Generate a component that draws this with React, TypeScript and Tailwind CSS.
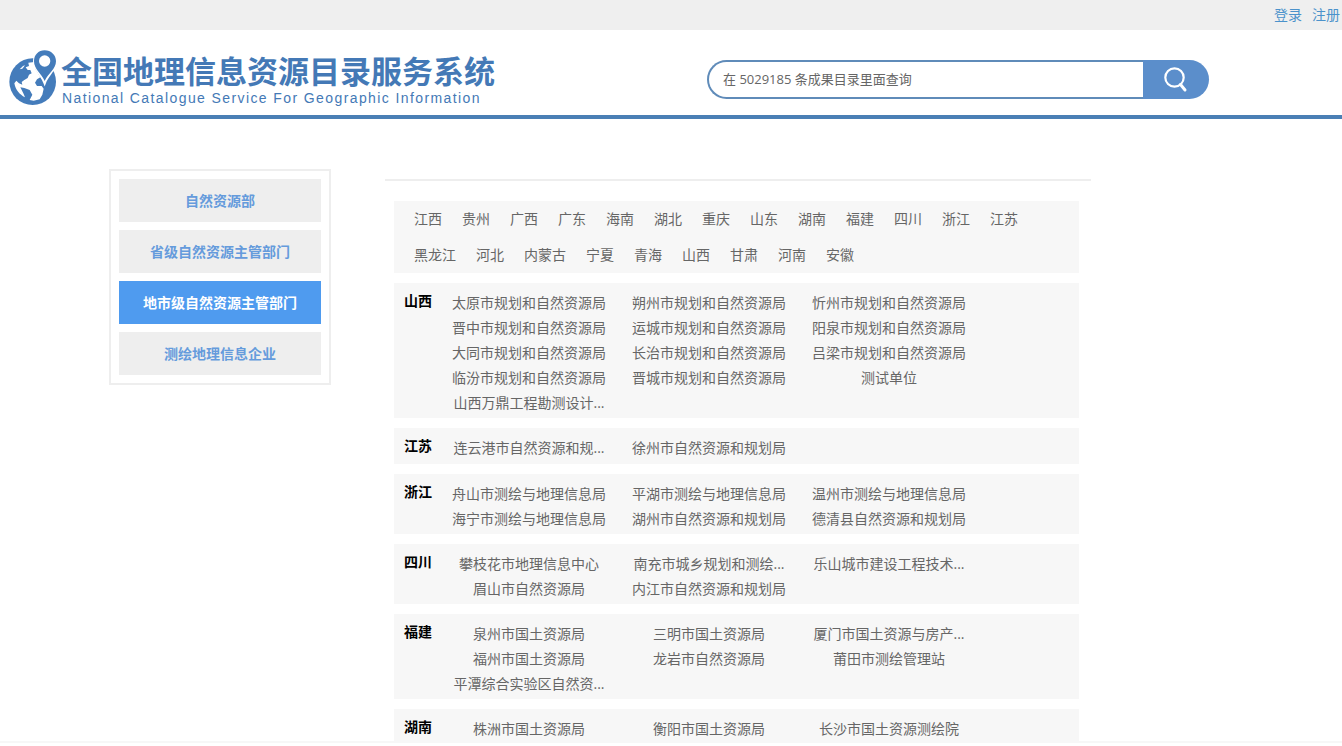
const regions = [
  "江西", "贵州", "广西", "广东", "海南", "湖北", "重庆", "山东", "湖南", "福建", "四川",
  "浙江", "江苏", "黑龙江", "河北", "内蒙古", "宁夏", "青海", "山西", "甘肃", "河南", "安徽",
];

interface Group {
  name: string;
  units: string[];
}

const groups: Group[] = [
  {
    name: "山西",
    units: [
      "太原市规划和自然资源局",
      "朔州市规划和自然资源局",
      "忻州市规划和自然资源局",
      "晋中市规划和自然资源局",
      "运城市规划和自然资源局",
      "阳泉市规划和自然资源局",
      "大同市规划和自然资源局",
      "长治市规划和自然资源局",
      "吕梁市规划和自然资源局",
      "临汾市规划和自然资源局",
      "晋城市规划和自然资源局",
      "测试单位",
      "山西万鼎工程勘测设计...",
    ],
  },
  {
    name: "江苏",
    units: ["连云港市自然资源和规...", "徐州市自然资源和规划局"],
  },
  {
    name: "浙江",
    units: [
      "舟山市测绘与地理信息局",
      "平湖市测绘与地理信息局",
      "温州市测绘与地理信息局",
      "海宁市测绘与地理信息局",
      "湖州市自然资源和规划局",
      "德清县自然资源和规划局",
    ],
  },
  {
    name: "四川",
    units: [
      "攀枝花市地理信息中心",
      "南充市城乡规划和测绘...",
      "乐山城市建设工程技术...",
      "眉山市自然资源局",
      "内江市自然资源和规划局",
    ],
  },
  {
    name: "福建",
    units: [
      "泉州市国土资源局",
      "三明市国土资源局",
      "厦门市国土资源与房产...",
      "福州市国土资源局",
      "龙岩市自然资源局",
      "莆田市测绘管理站",
      "平潭综合实验区自然资...",
    ],
  },
  {
    name: "湖南",
    units: ["株洲市国土资源局", "衡阳市国土资源局", "长沙市国土资源测绘院"],
  },
];

const categories = [
  { label: "自然资源部", active: false },
  { label: "省级自然资源主管部门", active: false },
  { label: "地市级自然资源主管部门", active: true },
  { label: "测绘地理信息企业", active: false },
];

function GlobeLogo() {
  return (
    <svg viewBox="0 0 144 168" className="h-14 w-12 shrink-0" aria-hidden="true">
      <circle cx="71" cy="95" r="70" fill="#447cbb" />
      {/* oceans */}
      <path
        d="M58 38 L76 36 L80 58 L94 82 L84 88 L78 98 L84 108 L98 108 L104 116 L100 134 L92 148 L74 152 L62 150 L70 134 L62 120 L46 114 L34 112 L44 132 L48 142 C32 134 20 120 16 100 L22 92 L30 100 L40 104 L38 96 L46 90 L56 84 L60 74 L68 70 L64 60 L56 60 L50 52 L60 48 Z"
        fill="#fff"
      />
      <path d="M32 58 L42 48 L48 46 L40 56 Z" fill="#fff" />
      {/* pin */}
      <path
        d="M107 2 C88 2 76 16 76 34 C76 58 98 74 107 98 C116 74 140 58 140 34 C140 16 126 2 107 2 Z"
        fill="#447cbb"
        stroke="#fff"
        strokeWidth="8"
      />
      <path
        d="M107 1 C88 1 75 15 75 34 C75 58 97 70 107 93 C117 70 141 58 141 34 C141 15 126 1 107 1 Z"
        fill="#447cbb"
      />
      <circle cx="107" cy="33" r="17" fill="#fff" />
    </svg>
  );
}

function TopBar() {
  return (
    <div className="flex h-[30px] shrink-0 items-center justify-end gap-2.5 bg-[#efefef] pr-0.5 text-sm text-[#4b92cb]">
      <a href="#login">登录</a>
      <a href="#register">注册</a>
    </div>
  );
}

function SearchBox() {
  return (
    <form
      className="flex h-[39px] w-full max-w-[502px]"
      onSubmit={(e) => e.preventDefault()}
    >
      <input
        type="text"
        aria-label="查询"
        placeholder="在 5029185 条成果目录里面查询"
        className="min-w-0 flex-1 rounded-l-full border-2 border-r-0 border-[#5f8bb9] bg-white pl-3.5 text-[13px] text-[#555] outline-none placeholder:text-[#666]"
      />
      <button
        type="submit"
        aria-label="搜索"
        className="flex w-[66px] items-center justify-center rounded-r-full bg-[#5b8ecb]"
      >
        <svg viewBox="0 0 24 26" className="h-[26px] w-6" fill="none" stroke="#fff" strokeWidth="2.2">
          <circle cx="10.5" cy="10.5" r="9.2" />
          <path d="M16.5 17.5 L21 23" strokeWidth="3" strokeLinecap="round" />
        </svg>
      </button>
    </form>
  );
}

function Header() {
  return (
    <header className="flex shrink-0 items-start justify-between gap-10 border-b-4 border-[#4a7fb5] pt-5 pr-[133px] pb-[9px] pl-[9px]">
      <a href="#home" className="flex shrink-0 gap-1 text-[#4479b6]">
        <GlobeLogo />
        <span className="flex flex-col">
          <span className="text-[31px] leading-[42px] font-bold">全国地理信息资源目录服务系统</span>
          <span className="pl-px font-['Liberation_Sans',sans-serif] text-sm leading-3 tracking-widest">
            National Catalogue Service For Geographic Information
          </span>
        </span>
      </a>
      <div className="flex flex-1 justify-end pt-2.5">
        <SearchBox />
      </div>
    </header>
  );
}

function Sidebar() {
  return (
    <nav className="flex w-[222px] shrink-0 flex-col gap-2 border-2 border-[#eee] p-2">
      {categories.map((item) => (
        <a
          key={item.label}
          href="#category"
          className={`flex h-[43px] items-center justify-center text-sm font-bold ${
            item.active ? "bg-[#4f9bef] text-white" : "bg-[#eee] text-[#659bdc]"
          }`}
        >
          {item.label}
        </a>
      ))}
    </nav>
  );
}

function GroupPanel({ group }: { group: Group }) {
  return (
    <section className="flex bg-[#f7f7f7] pl-2.5">
      <h2 className="w-[35px] shrink-0 text-sm leading-9 font-bold text-black">{group.name}</h2>
      <ul className="flex w-[540px] flex-wrap pt-[7px] pb-[3px]">
        {group.units.map((unit) => (
          <li key={unit} className="w-1/3 text-center text-sm leading-[25px]">
            <a href="#unit">{unit}</a>
          </li>
        ))}
      </ul>
    </section>
  );
}

export default function App() {
  return (
    <div className="flex h-screen flex-col bg-white font-['Open_Sans','Noto_Sans_CJK_SC',sans-serif] text-[#666]">
      <TopBar />
      <Header />
      <div className="min-h-0 flex-1 overflow-hidden">
        <div className="mx-auto flex max-w-[1124px] items-start gap-[54px] pt-[50px]">
          <Sidebar />
          <main className="min-w-0 max-w-[706px] flex-1 pt-2.5">
            <div className="border-t-2 border-[#eee]" />
            <div className="flex flex-col gap-2.5 pt-5 pr-3 pl-[9px]">
              <ul className="flex flex-wrap gap-x-5 bg-[#f7f7f7] px-5 text-sm leading-9">
                {regions.map((name) => (
                  <li key={name}>
                    <a href="#region">{name}</a>
                  </li>
                ))}
              </ul>
              {groups.map((group) => (
                <GroupPanel key={group.name} group={group} />
              ))}
            </div>
          </main>
        </div>
      </div>
      <footer className="mb-[3px] shrink-0 border-t-2 border-[#f7f7f7]" />
    </div>
  );
}
